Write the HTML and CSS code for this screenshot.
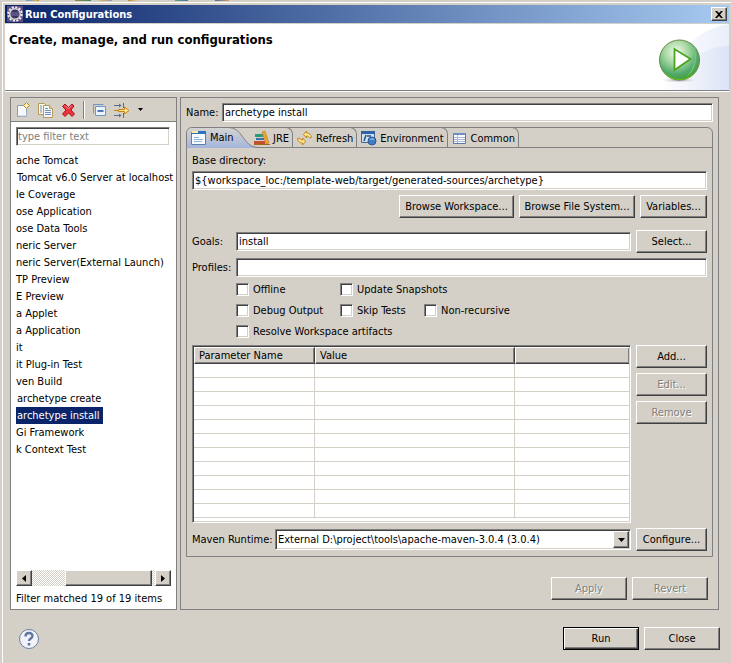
FILE: index.html
```
<!DOCTYPE html>
<html lang="en">
<head>
  <meta charset="UTF-8">
  <meta name="viewport" content="width=device-width, initial-scale=1.0">
  <title>Run Configurations</title>
  <link rel="stylesheet" href="styles.css">
</head>
<body>
  <div class="dialog">
    <div class="titlebar">
      <svg class="title-icon" width="16" height="16" viewBox="0 0 16 16">
        <rect width="16" height="16" fill="#5a4a80"/>
        <circle cx="8" cy="8" r="6.8" fill="none" stroke="#e8e8ec" stroke-width="2" stroke-dasharray="2.2 1.36"/>
        <circle cx="8" cy="8" r="5.3" fill="#3a3560" stroke="#d8d8dc" stroke-width="1.5"/>
        <path d="M4 7h8M4 9h8" stroke="#7a74a8"/>
      </svg>
      <span class="title">Run Configurations</span>
      <button class="close-x" aria-label="Close window">
        <svg width="8" height="7" viewBox="0 0 8 7"><path d="M0 0h2l2 2 2-2h2L5 3.5 8 7H6L4 5 2 7H0l3-3.5z" fill="#000"/></svg>
      </button>
    </div>

    <div class="banner">
      <h1>Create, manage, and run configurations</h1>
      <svg class="banner-art" width="75" height="66" viewBox="0 0 75 66">
        <defs>
          <linearGradient id="sky" x1="0" y1="0" x2="1" y2="0">
            <stop offset="0" stop-color="#fff"/>
            <stop offset="1" stop-color="#dbe3f6"/>
          </linearGradient>
          <radialGradient id="ball" cx=".42" cy=".3" r=".75">
            <stop offset="0" stop-color="#f2faee"/>
            <stop offset=".4" stop-color="#a5d7a0"/>
            <stop offset=".75" stop-color="#4ea869"/>
            <stop offset="1" stop-color="#43a01c"/>
          </radialGradient>
          <radialGradient id="shade">
            <stop offset="0" stop-color="#8a8090"/>
            <stop offset="1" stop-color="#fff" stop-opacity="0"/>
          </radialGradient>
        </defs>
        <path d="M8 66C20 28 44 5 75 0v66z" fill="url(#sky)" opacity=".6"/>
        <path d="M8 66C25 40 48 23 75 22v44z" fill="url(#sky)"/>
        <ellipse cx="25" cy="56" rx="20" ry="3" fill="url(#shade)"/>
        <circle cx="25.5" cy="36" r="20" fill="url(#ball)" stroke="#6a8a45"/>
        <path d="M38 20c6 10 5 26-5 32 9-9 10-22 5-32z" fill="#a5d7a0" opacity=".6"/>
        <path d="M11 49c8 8 21 8 29 0-4 9-25 9-29 0z" fill="#63c31b"/>
        <path d="M20.5 25v21l16-11z" fill="#fff" stroke="#4aa51e" stroke-width="1.8"/>
      </svg>
    </div>

    <div class="main">
      <div class="panel side">
        <div class="toolbar">
          <button class="tool" aria-label="New">
            <svg width="16" height="16" viewBox="0 0 16 16">
              <path d="M1.5 3.5h6l3 3v8h-9z" fill="#f6faff" stroke="#8d9bb0"/>
              <path d="M3 14h8V9" fill="none" stroke="#b7c8e4"/>
              <path d="M10.5 .5 13.5 3.5 10.5 6.5 7.5 3.5z" fill="#ffe680" stroke="#b88a1e"/>
              <path d="M10.5 1v5M8 3.5h5" stroke="#fff6c8"/>
            </svg>
          </button>
          <button class="tool" aria-label="Duplicate">
            <svg width="16" height="16" viewBox="0 0 16 16">
              <path d="M.5 1.5h6l2 2v9h-8z" fill="#fff8e0" stroke="#b79a58"/>
              <path d="M2 4h2M2 6h2M2 8h2M2 10h2" stroke="#6d8fc4"/>
              <path d="M5.5 3.5h6l3 3v9h-9z" fill="#f4f8ff" stroke="#b79a58"/>
              <path d="M11.5 3.5v3h3" fill="#f2d480" stroke="#b79a58"/>
              <path d="M7 8.5h6M7 10.5h6M7 12.5h6M7 6.5h3" stroke="#6d8fc4"/>
            </svg>
          </button>
          <button class="tool" aria-label="Delete">
            <svg width="16" height="16" viewBox="0 0 16 16">
              <path d="M2.5 4.5 5 2l3.5 3.5L12 2l2 2-3 4 3.5 4-2.5 2.5L8.5 11 5 14.5 2.5 12 6 8z" fill="#e8343c" stroke="#b5121c"/>
              <path d="M5 3.5 8.5 7l3-3.5" fill="none" stroke="#ff8b8b"/>
            </svg>
          </button>
          <span class="tool-sep"></span>
          <button class="tool" aria-label="Collapse all">
            <svg width="16" height="16" viewBox="0 0 16 16">
              <path d="M2.5 11.5v-9h10" fill="none" stroke="#6f96c4"/>
              <path d="M4.5 4.5h10v9h-10z" fill="#e9f4ff" stroke="#6f96c4"/>
              <path d="M6.5 9h6" stroke="#1a4fa0" stroke-width="1.5"/>
            </svg>
          </button>
          <button class="tool filter" aria-label="Filter">
            <svg width="17" height="16" viewBox="0 0 17 16">
              <path d="M1 3.5h7M1 13.5h7" stroke="#53708f"/>
              <path d="M6 1.5 8.5 3.5 6 5.5zM6 11.5l2.5 2L6 15.5z" fill="#53708f"/>
              <path d="M10.5 1v5M10.5 11v5" stroke="#53708f"/>
              <path d="M1 8.5h4" stroke="#c08518"/>
              <path d="M5.5 7.5h6v-2.5l4.5 3.5-4.5 3.5v-2.5h-6z" fill="#ffe48a" stroke="#c08518"/>
            </svg>
            <svg class="caret" width="5" height="3" viewBox="0 0 5 3"><path d="M0 0h5L2.5 3z"/></svg>
          </button>
        </div>

        <div class="side-body">
          <input class="field filter-text" type="text" placeholder="type filter text" aria-label="Filter">
          <ul class="tree">
            <li>ache Tomcat</li>
            <li class="child">Tomcat v6.0 Server at localhost</li>
            <li>le Coverage</li>
            <li>ose Application</li>
            <li>ose Data Tools</li>
            <li>neric Server</li>
            <li>neric Server(External Launch)</li>
            <li>TP Preview</li>
            <li>E Preview</li>
            <li>a Applet</li>
            <li>a Application</li>
            <li>it</li>
            <li>it Plug-in Test</li>
            <li>ven Build</li>
            <li class="child">archetype create</li>
            <li><span class="selected">archetype install</span></li>
            <li>Gi Framework</li>
            <li>k Context Test</li>
          </ul>
          <div class="scrollbar">
            <button class="raised" aria-label="Scroll left"><svg width="4" height="7" viewBox="0 0 4 7"><path d="M4 0v7L0 3.5z"/></svg></button>
            <div class="track"><div class="thumb raised"></div></div>
            <button class="raised" aria-label="Scroll right"><svg width="4" height="7" viewBox="0 0 4 7"><path d="M0 0v7l4-3.5z"/></svg></button>
          </div>
          <p class="status">Filter matched 19 of 19 items</p>
        </div>
      </div>

      <div class="panel editor">
        <div class="name-row">
          <label for="name">Name:</label>
          <input class="field" id="name" type="text" value="archetype install">
        </div>

        <div class="folder">
          <div class="tabs">
            <button class="tab active">
              <svg class="tab-shape" width="71" height="21" viewBox="0 0 71 21">
                <defs>
                  <linearGradient id="tabfill" x1="0" y1="0" x2="0" y2="1">
                    <stop offset="0" stop-color="#d4d3d2"/>
                    <stop offset="1" stop-color="#a4b5dc"/>
                  </linearGradient>
                </defs>
                <path d="M0 21V6Q1 1 6 1h36c14 0 14 19.5 29 19.5V21z" fill="url(#tabfill)"/>
                <path d="M42 .5c14 0 14 20 29 20" fill="none" stroke="#808080"/>
              </svg>
              <svg width="16" height="16" viewBox="0 0 16 16">
                <path d="M.5 2.5h14v12h-14z" fill="#f5fbff" stroke="#5d7fa8"/>
                <path d="M1 1h6v2H1z" fill="#ffe9a0"/>
                <path d="M7 1h8v3H1V3h6z" fill="#2e76b8"/>
                <path d="M3 7.5h5M3 9.5h9M3 11.5h8" stroke="#8fb0cf"/>
              </svg>
              Main
            </button>
            <button class="tab">
              <svg width="16" height="16" viewBox="0 0 16 16">
                <path d="M1 4h8v3H1z" fill="#2c9a72"/>
                <path d="M2 8h8v2H2z" fill="#3a6fb0"/>
                <path d="M0 11h11v3H0z" fill="#c4502e"/>
                <path d="M8 2l3-1 4 12-3 1z" fill="#efa22c" stroke="#b8701c" stroke-width=".5"/>
                <path d="M0 14.5h16" stroke="#a06820"/>
              </svg>
              JRE
            </button>
            <button class="tab">
              <svg width="16" height="16" viewBox="0 0 16 16">
                <path d="M6.5 4.5 9.5 1v2c3 0 4.500 1.500 5 4.500l-2 .5C12 6.500 11 6 9.500 6v2z" fill="#ffe48a" stroke="#b8801a" stroke-width=".9"/>
                <path d="M8.5 11.5 5.5 15v-2c-3 0-4.500-1.500-5-4.500l2-.5c.5 1.500 1.500 2 3 2V8z" fill="#ffe48a" stroke="#b8801a" stroke-width=".9"/>
              </svg>
              Refresh
            </button>
            <button class="tab">
              <svg width="16" height="16" viewBox="0 0 16 16">
                <path d="M.5 2.5h13v10H.5z" fill="#cfe0f2" stroke="#47658f"/>
                <path d="M0 1h14v3H0z" fill="#2f62a8"/>
                <path d="M3 11l2-6M6 6h4" stroke="#2c4f86" stroke-width="1.5"/>
                <circle cx="11" cy="11" r="4" fill="#3f7dc0" stroke="#2b5a96"/>
                <path d="M9 9.5q2-1.5 4 0" fill="none" stroke="#a6cdf0"/>
              </svg>
              Environment
            </button>
            <button class="tab">
              <svg width="16" height="16" viewBox="0 0 16 16">
                <path d="M1.5 3.5h12v10h-12z" fill="#fff" stroke="#5b76a8"/>
                <path d="M1 3h13v2H1z" fill="#6d8cc4"/>
                <path d="M2 7.5h11M2 9.5h11M2 11.5h11M5.5 5v8" stroke="#a8b8d4"/>
              </svg>
              Common
            </button>
          </div>

          <div class="page">
            <label for="basedir">Base directory:</label>
            <input class="field basedir" id="basedir" type="text" value="${workspace_loc:/template-web/target/generated-sources/archetype}">
            <div class="browse">
              <button class="btn">Browse Workspace...</button>
              <button class="btn">Browse File System...</button>
              <button class="btn">Variables...</button>
            </div>

            <div class="form">
              <label for="goals">Goals:</label>
              <input class="field" id="goals" type="text" value="install">
              <button class="btn side-btn">Select...</button>
              <label for="profiles">Profiles:</label>
              <input class="field wide" id="profiles" type="text">
            </div>

            <div class="checks">
              <label><input type="checkbox">Offline</label>
              <label class="rest"><input type="checkbox">Update Snapshots</label>
              <label><input type="checkbox">Debug Output</label>
              <label><input type="checkbox">Skip Tests</label>
              <label><input type="checkbox">Non-recursive</label>
              <label class="all"><input type="checkbox">Resolve Workspace artifacts</label>
            </div>

            <div class="params">
              <div class="table-box">
                <table>
                  <colgroup><col class="col-name"><col class="col-value"><col></colgroup>
                  <thead>
                    <tr><th>Parameter Name</th><th>Value</th><th></th></tr>
                  </thead>
                  <tbody>
                    <tr><td></td><td></td><td></td></tr>
                    <tr><td></td><td></td><td></td></tr>
                    <tr><td></td><td></td><td></td></tr>
                    <tr><td></td><td></td><td></td></tr>
                    <tr><td></td><td></td><td></td></tr>
                    <tr><td></td><td></td><td></td></tr>
                    <tr><td></td><td></td><td></td></tr>
                    <tr><td></td><td></td><td></td></tr>
                    <tr><td></td><td></td><td></td></tr>
                    <tr><td></td><td></td><td></td></tr>
                    <tr><td></td><td></td><td></td></tr>
                  </tbody>
                </table>
              </div>
              <div class="param-buttons">
                <button class="btn side-btn">Add...</button>
                <button class="btn side-btn" disabled>Edit...</button>
                <button class="btn side-btn" disabled>Remove</button>
              </div>
            </div>

            <div class="runtime">
              <label for="runtime">Maven Runtime:</label>
              <div class="combo">
                <select id="runtime">
                  <option>External D:\project\tools\apache-maven-3.0.4 (3.0.4)</option>
                </select>
                <span class="combo-arrow raised"><svg width="7" height="4" viewBox="0 0 7 4"><path d="M0 0h7L3.5 4z"/></svg></span>
              </div>
              <button class="btn side-btn">Configure...</button>
            </div>
          </div>
        </div>

        <div class="apply-row">
          <button class="btn action" disabled>Apply</button>
          <button class="btn action" disabled>Revert</button>
        </div>
      </div>
    </div>

    <div class="footer">
      <button class="help" aria-label="Help">
        <svg width="22" height="22" viewBox="0 0 22 22">
          <circle cx="11" cy="11" r="9.5" fill="#f1f3f8" stroke="#6b7fa3"/>
          <path d="M7.5 8.5C7.5 4 14.5 4 14.5 8c0 2.5-3.5 2.5-3.5 5" fill="none" stroke="#5f759c" stroke-width="2.4"/>
          <path d="M9.7 15h2.6v2.5H9.7z" fill="#5f759c"/>
        </svg>
      </button>
      <button class="btn action default">Run</button>
      <button class="btn action">Close</button>
    </div>
  </div>
</body>
</html>
```
FILE: styles.css
```
* {
  box-sizing: border-box;
}

body {
  margin: 0;
  min-height: 100vh;
  display: flex;
  padding: 2px 0 0 2px;
  background: #d4d0c8;
  font-family: "DejaVu Sans Condensed", "DejaVu Sans", Tahoma, sans-serif;
  font-size: 11px;
  line-height: 13px;
  color: #000;
  /* slivers of the window behind the dialog */
  background-image:
    linear-gradient(90deg, transparent 26px, #6fa5cf 26px, #6fa5cf 30px, #e0b040 36px, #c08a20 39px, transparent 39px, transparent 75px, #9a8a50 75px, #3f8a60 91px, transparent 91px, transparent 99px, #e8b860 99px, #8c9cb8 112px, transparent 112px, transparent 128px, #c08a40 128px, #ecd08a 138px, transparent 138px, transparent 175px, #5aa880 175px, #4a6fb0 188px, transparent 188px, transparent 215px, #4a6fb0 215px, #d0a060 229px, transparent 229px);
  background-size: 330px 1px;
  background-repeat: no-repeat;
}

button,
input,
select {
  font: inherit;
  color: inherit;
}

button {
  padding: 0;
  border: 0;
  background: none;
}

svg {
  display: block;
  flex: none;
}

.dialog {
  flex: 1;
  display: flex;
  flex-direction: column;
  border: solid #fff;
  border-width: 1px 0 0 1px;
  padding: 2px 2px 0 2px;
}

/* title bar */
.titlebar {
  display: flex;
  align-items: center;
  height: 18px;
  padding: 0 2px;
  background: linear-gradient(90deg, #0a246a, #a6caf0);
}

.title {
  flex: 1;
  margin-left: 2px;
  color: #fff;
  font-weight: bold;
}

.close-x {
  display: flex;
  align-items: center;
  justify-content: center;
  width: 16px;
  height: 14px;
}

.raised,
.close-x,
.btn {
  background: #d4d0c8;
  border: 1px solid;
  border-color: #fff #404040 #404040 #fff;
  box-shadow: inset -1px -1px 0 #808080;
}

/* banner */
.banner {
  display: flex;
  justify-content: space-between;
  margin-top: 1px;
  background: #fff;
  border-bottom: 1px solid #808080;
}

.banner h1 {
  margin: 8px 0 0 4px;
  font-size: 13px;
  line-height: 16px;
}

/* main area */
.main {
  flex: 1;
  display: flex;
  gap: 3px;
  padding: 5px 10px 0 5px;
  border-top: 1px solid #fff;
}

.panel {
  display: flex;
  flex-direction: column;
  border: 1px solid #808080;
}

.side {
  width: 167px;
  background: #fff;
}

.editor {
  flex: 1;
  min-width: 0;
  padding: 5px 5px 9px;
}

.toolbar {
  display: flex;
  align-items: center;
  gap: 6px;
  height: 24px;
  padding: 0 5px;
  background: #d4d0c8;
  border-bottom: 1px solid #808080;
}

.tool-sep {
  width: 2px;
  height: 18px;
  margin-left: 1px;
  border-left: 1px solid #808080;
  border-right: 1px solid #fff;
}

.filter {
  display: flex;
  align-items: center;
  gap: 8px;
}

.side-body {
  flex: 1;
  display: flex;
  flex-direction: column;
  padding: 5px 5px 4px;
}

.field {
  width: 100%;
  min-width: 0;
  height: 19px;
  padding: 0 2px;
  border: 1px solid;
  border-color: #808080 #fff #fff #808080;
  border-radius: 0;
  background: #fff;
  box-shadow: inset 1px 1px 0 #404040, inset -1px -1px 0 #d4d0c8;
  outline: none;
}

.filter-text {
  width: 154px;
  padding: 0 1px;
}

.field::placeholder {
  color: #808080;
}

.tree {
  flex: 1;
  margin: 6px 0 0;
  padding: 0;
  list-style: none;
}

.tree li {
  height: 17px;
  line-height: 18px;
  white-space: nowrap;
}

.tree .child {
  padding-left: 1px;
}

.selected {
  display: inline-block;
  height: 17px;
  padding: 0 3px 0 1px;
  background: #0a246a;
  color: #fff;
}

.scrollbar {
  display: flex;
  height: 16px;
}

.scrollbar button {
  display: flex;
  align-items: center;
  justify-content: center;
  width: 16px;
}

.track {
  flex: 1;
  display: flex;
  justify-content: flex-end;
  padding-right: 3px;
  background: repeating-conic-gradient(#d4d0c8 0 25%, #fff 0 50%) 0 0 / 2px 2px;
}

.thumb {
  width: 87px;
}

.status {
  margin: 6px 0 0;
}

/* editor */
.name-row,
.runtime {
  display: flex;
  align-items: center;
}

.name-row label {
  flex: none;
  width: 36px;
}

.folder {
  flex: 1;
  display: flex;
  flex-direction: column;
  margin-top: 5px;
  border: 1px solid #808080;
  border-radius: 6px 6px 0 0;
}

.tabs {
  display: flex;
  height: 20px;
  border-bottom: 1px solid #808080;
}

.tab {
  display: flex;
  align-items: center;
  gap: 3px;
  height: 21px;
  margin-top: -1px;
  padding: 0 3px 0 4px;
  border: solid #808080;
  border-width: 1px 1px 0 0;
  border-top-right-radius: 7px;
}

.tab.active {
  position: relative;
  z-index: 0;
  width: 63px;
  padding: 0 0 0 4px;
  border: 0;
}

.tab-shape {
  position: absolute;
  z-index: -1;
  top: 0;
  left: 0;
}

.page {
  flex: 1;
  display: flex;
  flex-direction: column;
  padding: 6px 5px 5px;
}

.basedir {
  margin-top: 4px;
}

.btn {
  height: 23px;
  padding: 0 4px;
  white-space: nowrap;
}

.btn:disabled {
  color: #808080;
  text-shadow: 1px 1px 0 #fff;
}

.browse {
  display: grid;
  grid-template-columns: 115px 116px 67px;
  justify-content: end;
  gap: 5px;
  margin: 5px 0 12px;
}

.side-btn {
  width: 71px;
}

.form {
  display: grid;
  grid-template-columns: 39px 1fr 71px;
  gap: 5px;
  align-items: center;
}

.form .wide {
  grid-column: span 2;
}

.checks {
  display: grid;
  grid-template-columns: 104px 84px 1fr;
  row-gap: 8px;
  margin: 6px 0 7px 44px;
}

.checks label {
  display: flex;
  align-items: center;
  gap: 4px;
  white-space: nowrap;
}

.checks .rest {
  grid-column: span 2;
}

.checks .all {
  grid-column: span 3;
}

.checks input {
  appearance: none;
  width: 13px;
  height: 13px;
  margin: 0;
  border: 1px solid;
  border-color: #808080 #fff #fff #808080;
  background: #fff;
  box-shadow: inset 1px 1px 0 #404040, inset -1px -1px 0 #d4d0c8;
}

.params {
  flex: 1;
  display: flex;
  gap: 5px;
}

.table-box {
  flex: 1;
  padding: 1px;
  border: 1px solid;
  border-color: #808080 #fff #fff #808080;
  background: #fff;
  box-shadow: inset 1px 1px 0 #404040, inset -1px -1px 0 #d4d0c8;
}

table {
  width: 100%;
  table-layout: fixed;
  border-collapse: separate;
  border-spacing: 0;
}

.col-name {
  width: 121px;
}

.col-value {
  width: 200px;
}

th {
  height: 17px;
  padding: 0 4px;
  background: #d4d0c8;
  border: 1px solid;
  border-color: #fff #404040 #404040 #fff;
  box-shadow: inset -1px -1px 0 #808080;
  font-weight: normal;
  text-align: left;
}

th:last-child,
td:last-child {
  border-right: 0;
}

td {
  height: 14px;
  padding: 0;
  border: solid #d4d0c8;
  border-width: 0 1px 1px 0;
}

.param-buttons {
  display: flex;
  flex-direction: column;
  gap: 5px;
}

.runtime {
  margin-top: 5px;
}

.runtime label {
  flex: none;
  width: 83px;
}

.combo {
  flex: 1;
  position: relative;
  margin-right: 5px;
}

.combo select {
  display: block;
  width: 100%;
  height: 21px;
  padding: 0 18px 0 2px;
  appearance: none;
  border: 1px solid;
  border-color: #808080 #fff #fff #808080;
  border-radius: 0;
  background: #fff;
  box-shadow: inset 1px 1px 0 #404040, inset -1px -1px 0 #d4d0c8;
}

.combo-arrow {
  position: absolute;
  top: 2px;
  right: 2px;
  bottom: 2px;
  width: 16px;
  display: flex;
  align-items: center;
  justify-content: center;
  pointer-events: none;
}

.apply-row {
  display: flex;
  justify-content: flex-end;
  gap: 5px;
  margin: 20px 5px 0 0;
}

.action {
  width: 76px;
}

/* footer */
.footer {
  display: flex;
  align-items: center;
  gap: 5px;
  padding: 17px 9px 13px 13px;
}

.help {
  margin-right: auto;
}

.default {
  border-color: #000;
  box-shadow: inset 1px 1px 0 #fff, inset -1px -1px 0 #404040, inset -2px -2px 0 #808080;
}
```
